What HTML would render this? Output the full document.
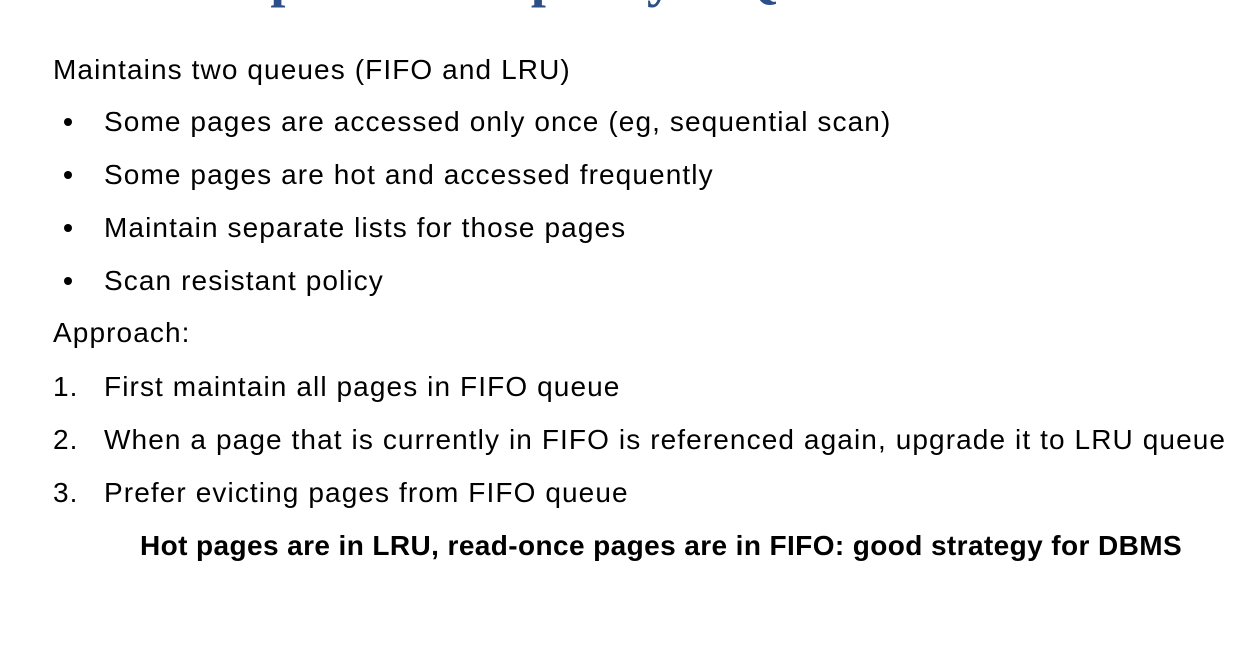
<!DOCTYPE html>
<html><head><meta charset="utf-8"><style>
html,body{margin:0;padding:0;background:#fff;width:1252px;height:664px;overflow:hidden;position:relative}
.t{position:absolute;font-family:"Liberation Sans",sans-serif;font-size:28px;letter-spacing:1.1px;color:#000;white-space:nowrap;line-height:30px}
.title{position:absolute;left:52px;top:-52px;font-family:"Liberation Serif",serif;font-weight:bold;font-size:54px;letter-spacing:1px;color:#2c4f8a;white-space:nowrap;line-height:60px}
.b{position:absolute;width:8px;height:8px;border-radius:50%;background:#000}
</style></head><body>
<div class="title">Buffer replacement policy: 2Q</div>
<div class="t" style="left:53px;top:55px">Maintains two queues (FIFO and LRU)</div>
<div class="b" style="left:64px;top:118px"></div>
<div class="t" style="left:104px;top:107px">Some pages are accessed only once (eg, sequential scan)</div>
<div class="b" style="left:64px;top:171px"></div>
<div class="t" style="left:104px;top:160px">Some pages are hot and accessed frequently</div>
<div class="b" style="left:64px;top:224px"></div>
<div class="t" style="left:104px;top:213px">Maintain separate lists for those pages</div>
<div class="b" style="left:64px;top:277px"></div>
<div class="t" style="left:104px;top:266px">Scan resistant policy</div>
<div class="t" style="left:53px;top:318px">Approach:</div>
<div class="t" style="left:53px;top:372px">1.</div>
<div class="t" style="left:104px;top:372px">First maintain all pages in FIFO queue</div>
<div class="t" style="left:53px;top:425px">2.</div>
<div class="t" style="left:104px;top:425px">When a page that is currently in FIFO is referenced again, upgrade it to LRU queue</div>
<div class="t" style="left:53px;top:478px">3.</div>
<div class="t" style="left:104px;top:478px">Prefer evicting pages from FIFO queue</div>
<div class="t" style="left:140px;top:531px;font-weight:bold;font-size:28px;letter-spacing:0.4px">Hot pages are in LRU, read-once pages are in FIFO: good strategy for DBMS</div>
</body></html>
